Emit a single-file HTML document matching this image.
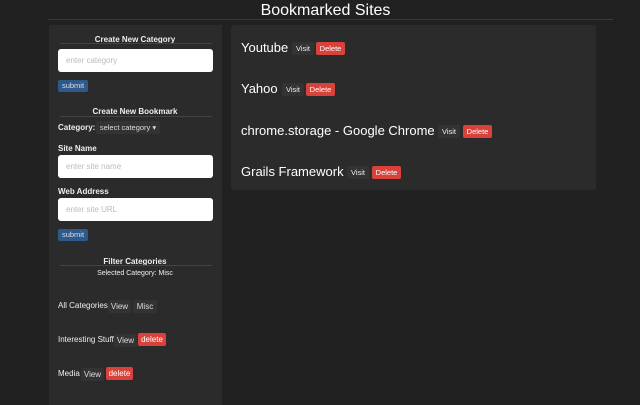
<!DOCTYPE html>
<html><head><style>
*{margin:0;padding:0;box-sizing:border-box}
body{width:640px;height:400px;background:#212121;font-family:"Liberation Sans",sans-serif;color:#eee;position:relative;overflow:hidden}
.a{position:absolute;white-space:nowrap}
.h{font-weight:bold;font-size:8px;text-align:center;width:154px;left:58px}
.ln{position:absolute;height:1px;background:#444}
.in{position:absolute;left:58px;width:155px;height:23px;background:#fff;border-radius:3px;color:#bbb;font-size:8px;padding:7px 0 0 8px}
.sb{position:absolute;left:58px;width:30px;height:12px;background:#2d5a8a;border-radius:2px;color:#dde;font-size:7.5px;text-align:center;line-height:12px}
.lb{font-weight:bold;font-size:8px}
.b{position:absolute;height:13px;border-radius:2px;font-size:8px;line-height:13px;text-align:center;background:#333;color:#ddd}
.r{background:#d9423a;color:#fff}
.t{font-size:13px;color:#fff}
.bv{position:absolute;height:13px;border-radius:2px;font-size:7.5px;line-height:13px;text-align:center}
</style></head><body>
<div class="a" style="left:0;width:651px;text-align:center;top:2px;font-size:16px;color:#fff">Bookmarked Sites</div>
<div class="ln" style="left:48px;width:565px;top:19px;background:#3a3a3a"></div>
<div class="a" style="left:49px;top:25px;width:173px;height:380px;background:#2b2b2b"></div>
<div class="a" style="left:231px;top:25px;width:365px;height:165px;background:#2b2b2b;border-radius:3px"></div>

<div class="a h" style="top:35px">Create New Category</div>
<div class="ln" style="left:60px;width:152px;top:43px"></div>
<div class="in" style="top:49px">enter category</div>
<div class="sb" style="top:80px">submit</div>
<div class="a h" style="top:107px">Create New Bookmark</div>
<div class="ln" style="left:60px;width:152px;top:116px"></div>
<div class="a lb" style="left:58px;top:123px">Category:</div>
<div class="b" style="left:96px;top:121px;width:64px;font-size:7.5px">select category ▾</div>
<div class="a lb" style="left:58px;top:144px">Site Name</div>
<div class="in" style="top:155px">enter site name</div>
<div class="a lb" style="left:58px;top:187px">Web Address</div>
<div class="in" style="top:198px">enter site URL</div>
<div class="sb" style="top:229px">submit</div>
<div class="a h" style="top:257px">Filter Categories</div>
<div class="ln" style="left:60px;width:152px;top:265px"></div>
<div class="a" style="left:58px;width:154px;text-align:center;top:270px;font-size:7px">Selected Category: Misc</div>
<div class="a" style="left:58px;top:301px;font-size:8px">All Categories</div>
<div class="b" style="left:108px;top:300px;width:23px">View</div>
<div class="b" style="left:133px;top:300px;width:24px">Misc</div>
<div class="a" style="left:58px;top:335px;font-size:8px">Interesting Stuff</div>
<div class="b" style="left:114px;top:334px;width:23px">View</div>
<div class="b r" style="left:138px;top:333px;width:28px">delete</div>
<div class="a" style="left:58px;top:369px;font-size:8px">Media</div>
<div class="b" style="left:81px;top:368px;width:23px">View</div>
<div class="b r" style="left:106px;top:367px;width:27px">delete</div>

<div class="a t" style="left:241px;top:40px">Youtube</div>
<div class="bv" style="left:292px;top:42px;width:22px;background:#333">Visit</div>
<div class="bv r" style="left:316px;top:42px;width:29px">Delete</div>
<div class="a t" style="left:241px;top:81px">Yahoo</div>
<div class="bv" style="left:282px;top:83px;width:22px;background:#333">Visit</div>
<div class="bv r" style="left:306px;top:83px;width:29px">Delete</div>
<div class="a t" style="left:241px;top:123px">chrome.storage - Google Chrome</div>
<div class="bv" style="left:438px;top:125px;width:22px;background:#333">Visit</div>
<div class="bv r" style="left:463px;top:125px;width:29px">Delete</div>
<div class="a t" style="left:241px;top:164px">Grails Framework</div>
<div class="bv" style="left:347px;top:166px;width:22px;background:#333">Visit</div>
<div class="bv r" style="left:372px;top:166px;width:29px">Delete</div>
</body></html>
